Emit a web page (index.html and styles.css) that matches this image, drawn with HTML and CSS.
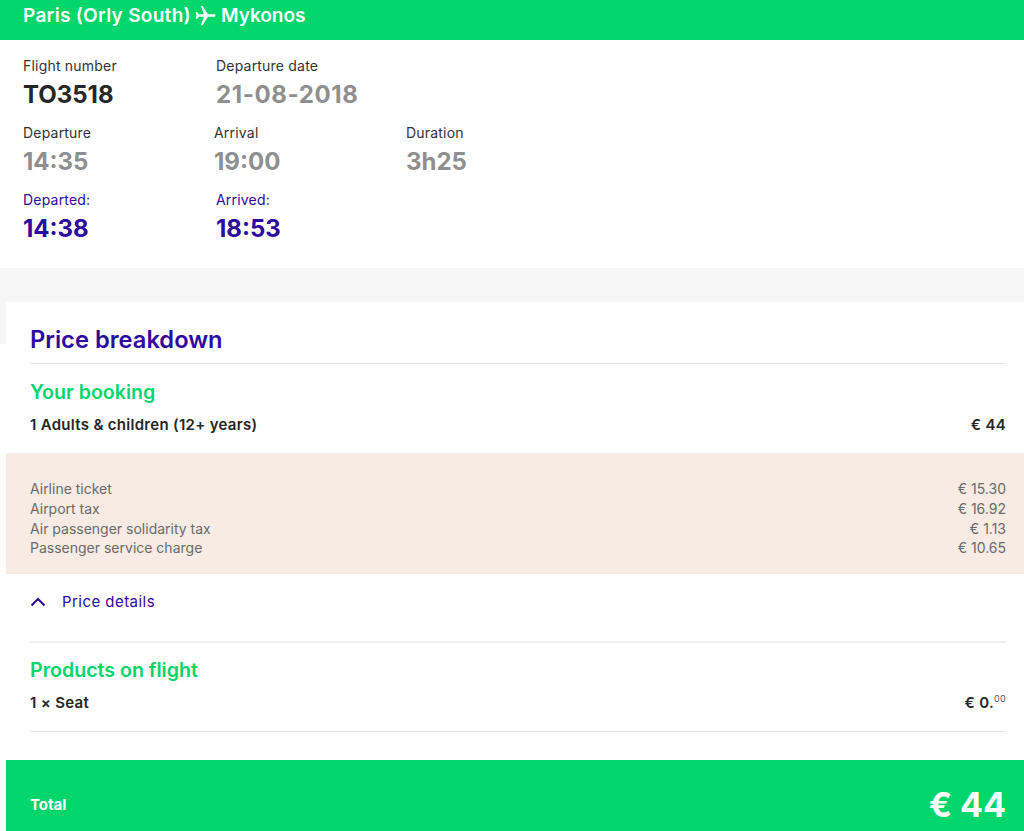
FILE: index.html
```html
<!DOCTYPE html>
<html lang="en">
<head>
<meta charset="utf-8">
<title>Flight details</title>
<link rel="stylesheet" href="styles.css">
</head>
<body>
<header class="route">
  <span class="route-from">Paris (Orly South)</span>
  <svg class="plane" viewBox="0 0 24 24" aria-hidden="true"><path d="M23.500 12c0-.9-1-1.400-2.200-1.400h-6.500L8.600 1H6.800l3.300 9.600H4.200L2.300 8H.8l1 4-1 4h1.500l1.900-2.600h5.900L6.800 23h1.800l6.200-9.600h6.500c1.200 0 2.200-.5 2.200-1.400z"/></svg>
  <span>Mykonos</span>
</header>
<section class="flight">
  <div class="flight-row">
    <div class="cell cell-wide"><div class="label">Flight number</div><div class="value dark">TO3518</div></div>
    <div class="cell"><div class="label">Departure date</div><div class="value muted date">21-08-2018</div></div>
  </div>
  <div class="flight-row">
    <div class="cell cell-narrow"><div class="label">Departure</div><div class="value muted">14:35</div></div>
    <div class="cell cell-mid"><div class="label">Arrival</div><div class="value muted">19:00</div></div>
    <div class="cell"><div class="label">Duration</div><div class="value muted">3h25</div></div>
  </div>
  <div class="flight-row">
    <div class="cell cell-wide"><div class="label purple">Departed:</div><div class="value purple">14:38</div></div>
    <div class="cell"><div class="label purple">Arrived:</div><div class="value purple">18:53</div></div>
  </div>
</section>
<div class="band"></div>
<main class="card">
  <div class="inner">
    <h1 class="title">Price breakdown</h1>
    <h2 class="subtitle first">Your booking</h2>
    <div class="line strong booking"><span>1 Adults &amp; children (12+ years)</span><span>€ 44</span></div>
  </div>
  <div class="details">
    <div class="line"><span>Airline ticket</span><span>€ 15.30</span></div>
    <div class="line"><span>Airport tax</span><span>€ 16.92</span></div>
    <div class="line"><span>Air passenger solidarity tax</span><span>€ 1.13</span></div>
    <div class="line"><span>Passenger service charge</span><span>€ 10.65</span></div>
  </div>
  <div class="inner">
    <div class="toggle">
      <svg class="chevron" viewBox="0 0 16 10" aria-hidden="true"><path d="M1.500 8.500 8 2l6.500 6.500"/></svg>
      <span>Price details</span>
    </div>
    <div class="products">
      <h2 class="subtitle">Products on flight</h2>
      <div class="line strong seat"><span>1 × Seat</span><span>€ 0.<sup class="cents">00</sup></span></div>
    </div>
  </div>
  <div class="total"><span class="total-label">Total</span><span class="total-value">€ 44</span></div>
</main>
</body>
</html>
```
FILE: styles.css
```css
* { box-sizing: border-box; }
html, body { margin: 0; padding: 0; }
body {
  width: 1024px;
  height: 831px;
  overflow: hidden;
  background: #fff;
  font-family: Inter, "Liberation Sans", sans-serif;
  color: #262626;
}
.route {
  height: 40px;
  background: #00d66c;
  color: #fff;
  display: flex;
  align-items: center;
  gap: 5px;
  padding: 0 23px 9px 23px;
  font-size: 19px;
  font-weight: 600;
}
.route-from { letter-spacing: .3px; }
.plane { width: 21px; height: 21px; margin-left: -1px; fill: #fff; flex: none; }
.flight { height: 228px; padding: 16px 23px 0; }
.flight-row { display: flex; height: 67px; }
.cell-wide { width: 193px; }
.cell-narrow { width: 191px; }
.cell-mid { width: 192px; }
.label { font-size: 14px; line-height: 20px; letter-spacing: .2px; color: #333; }
.value { font-size: 24px; line-height: 30px; margin-top: 4px; font-weight: 700; }
.date { letter-spacing: .6px; }
.dark { color: #262626; }
.muted { color: #8f8f8f; }
.purple { color: #2e0a9e; }
.band { height: 76px; margin-bottom: -42px; background: #f6f6f6; }
.card { position: relative; margin-left: 6px; height: 529px; background: #fff; }
.inner { padding: 0 18px 0 24px; }
.title {
  margin: 0;
  height: 62px;
  padding-top: 22px;
  border-bottom: 1px solid #e6e6e6;
  font-size: 23.700px;
  line-height: 32px;
  font-weight: 600;
  color: #2e0a9e;
}
.subtitle { margin: 0; font-size: 19.600px; line-height: 26px; font-weight: 600; color: #00d66c; }
.subtitle.first { padding-top: 15px; }
.line { display: flex; justify-content: space-between; }
.strong { font-size: 15px; line-height: 20px; font-weight: 600; letter-spacing: .3px; color: #262626; }
.booking { margin-top: 10px; height: 38px; }
.details {
  height: 121px;
  padding: 26px 18px 0 24px;
  background: #f7ebe3;
  font-size: 14px;
  line-height: 19.800px;
  color: #6b6b6b;
}
.toggle {
  height: 69px;
  padding-top: 18px;
  display: flex;
  align-items: flex-start;
  gap: 16px;
  border-bottom: 2px solid #f0f0f0;
  font-size: 15px;
  line-height: 20px;
  letter-spacing: .45px;
  color: #2e0a9e;
}
.chevron { width: 16px; height: 10px; margin-top: 5px; fill: none; stroke: #2e0a9e; stroke-width: 2; }
.products { height: 89px; padding-top: 14px; border-bottom: 1px solid #e6e6e6; }
.seat { margin-top: 10px; }
.cents { font-size: 9px; font-weight: 400; line-height: 0; vertical-align: 6px; color: #555; }
.total {
  margin-top: 28px;
  height: 71px;
  padding: 18px 18px 0 24px;
  display: flex;
  justify-content: space-between;
  align-items: center;
  background: #00d66c;
  color: #fff;
}
.total-label { font-size: 15px; font-weight: 700; }
.total-value { font-size: 34px; font-weight: 700; }
```
